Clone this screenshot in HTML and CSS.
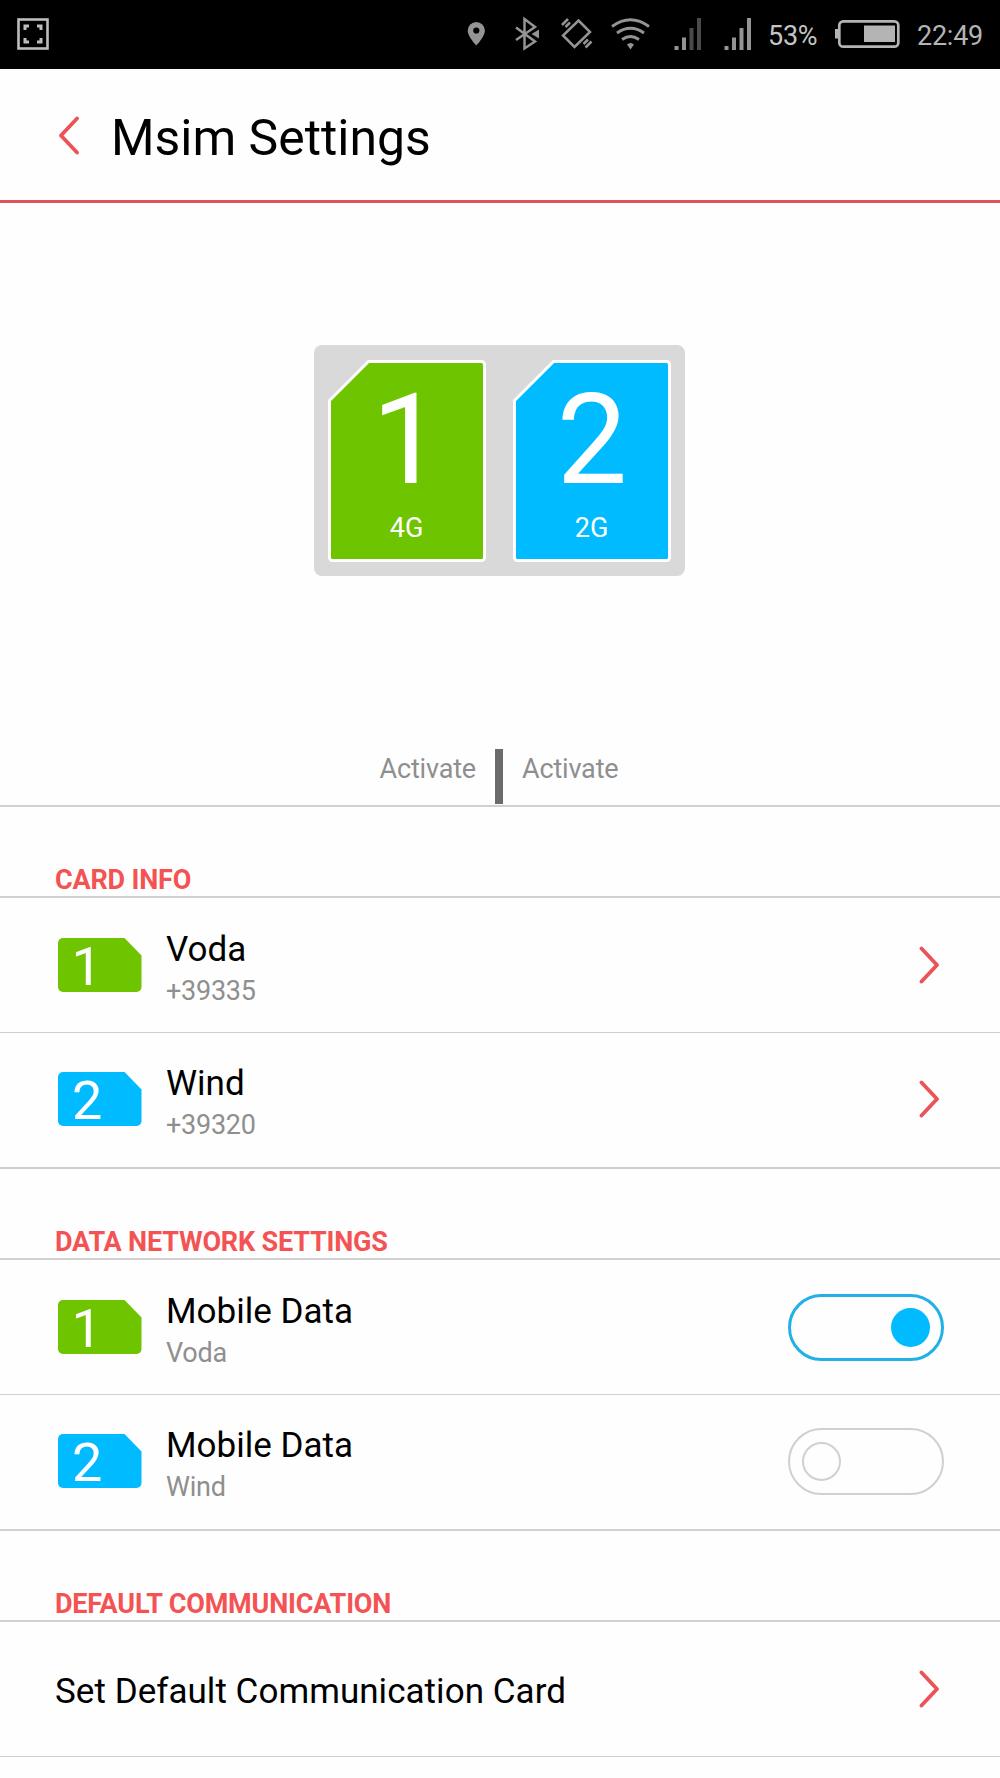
FILE: index.html
```html
<!DOCTYPE html>
<html lang="en">
<head>
<meta charset="utf-8">
<title>Msim Settings</title>
<link rel="stylesheet" href="styles.css">
</head>
<body>
<div class="status">
  <svg class="status-shot" width="34" height="69" viewBox="16 0 34 69" fill="none" stroke="#bdbdbd">
    <rect x="18.500" y="19.500" width="29" height="29" stroke-width="2.600"/>
    <path d="M25 30v-4h4M37 26h4v4M41 38v4h-4M29 42h-4v-4" stroke-width="3"/>
  </svg>
  <svg class="status-pin" width="18" height="69" viewBox="467 0 18 69" fill="#949494">
    <path fill-rule="evenodd" d="M476.300 22a8.600 8.600 0 0 0-8.600 8.600c0 6.200 8.600 15 8.600 15s8.600-8.800 8.600-15a8.600 8.600 0 0 0-8.600-8.600zm0 5.400a3.100 3.100 0 1 1 0 6.200a3.100 3.100 0 0 1 0-6.200z"/>
  </svg>
  <svg class="status-bt" width="26" height="69" viewBox="514 0 26 69" fill="none" stroke="#949494" stroke-width="2.500">
    <path d="M516 27.500l19 14-10.500 7V19l10.500 8-19 13"/>
    <path d="M539 29.500v9l-7.500-4.500z" fill="#949494" stroke="none"/>
  </svg>
  <svg class="status-vib" width="33" height="69" viewBox="560 0 33 69" fill="none" stroke="#949494" stroke-width="2.500">
    <path d="M578.500 20.500L590 32 574.500 47 563 35.500z"/>
    <path d="M562 25l6-6M565.500 27l4.500-4.500M583.500 44l4.500-4.500M585.500 47.500l6-6"/>
  </svg>
  <svg class="status-wifi" width="40" height="69" viewBox="611 0 40 69" fill="none" stroke="#949494" stroke-width="2.800">
    <path d="M612 26.500q18.500-13.500 37 0M617 33q13.500-9.500 27 0M622 39.500q8.500-6 17 0"/>
    <path d="M627 44.500q3.500-3 7 0l-3.500 5z" fill="#949494" stroke="none"/>
  </svg>
  <svg class="status-sig1" width="28" height="69" viewBox="674 0 28 69" fill="#949494">
    <path d="M674.500 46h4v4h-4zM682 37.500h4V50h-4z"/>
    <path d="M689.500 28h4v22h-4zM697 18h4v32h-4z" fill="#4b4b4b"/>
  </svg>
  <svg class="status-sig2" width="28" height="69" viewBox="724 0 28 69" fill="#949494">
    <path d="M724.500 46h4v4h-4zM732 37.500h4V50h-4zM739.500 28h4v22h-4zM747 18h4v32h-4z"/>
  </svg>
  <span class="status-pct">53%</span>
  <svg class="status-bat" width="65" height="69" viewBox="835 0 65 69">
    <rect x="839.300" y="21.300" width="59" height="25.400" rx="4" fill="none" stroke="#b4b4b4" stroke-width="2.700"/>
    <path d="M835 29h3v9.500h-3zM864 25.500h31V42h-31z" fill="#b4b4b4"/>
  </svg>
  <span class="status-time">22:49</span>
</div>

<header class="header">
  <svg class="back" width="21" height="39" viewBox="0 0 21 39"><path d="M19 2.500L3 19.500 19 36.500"/></svg>
  <h1 class="title">Msim Settings</h1>
</header>

<section class="hero">
  <div class="tray">
    <svg width="158" height="202" viewBox="0 0 158 202">
      <path class="sim-shape green" d="M40.500 1.500H153.500a3 3 0 0 1 3 3V197.500a3 3 0 0 1-3 3H4.500a3 3 0 0 1-3-3V40.500z"/>
      <text class="sim-digit" x="79" y="123">1</text>
      <text class="sim-net" x="78.500" y="177.400">4G</text>
    </svg>
    <svg width="158" height="202" viewBox="0 0 158 202">
      <path class="sim-shape blue" d="M40.500 1.500H153.500a3 3 0 0 1 3 3V197.500a3 3 0 0 1-3 3H4.500a3 3 0 0 1-3-3V40.500z"/>
      <text class="sim-digit" x="79" y="123">2</text>
      <text class="sim-net" x="78.500" y="177.400">2G</text>
    </svg>
  </div>
  <div class="activate">
    <span class="act-left">Activate</span>
    <span class="act-bar"></span>
    <span class="act-right">Activate</span>
  </div>
</section>

<h2 class="section">CARD INFO</h2>
<div class="row">
  <svg class="card" width="84" height="70" viewBox="0 -8 84 70"><path class="green" d="M5 0H66.500L83.500 17.500V49a5 5 0 0 1-5 5H5a5 5 0 0 1-5-5V5a5 5 0 0 1 5-5z"/><text class="card-digit" x="13.500" y="46.500">1</text></svg>
  <div class="label"><span class="name">Voda</span><span class="sub">+39335</span></div>
  <svg class="chev" width="21" height="38" viewBox="0 0 21 38"><path d="M2.500 2.500L18 19 2.500 35.500"/></svg>
</div>
<div class="row last">
  <svg class="card" width="84" height="70" viewBox="0 -8 84 70"><path class="blue" d="M5 0H66.500L83.500 17.500V49a5 5 0 0 1-5 5H5a5 5 0 0 1-5-5V5a5 5 0 0 1 5-5z"/><text class="card-digit" x="14" y="46.500">2</text></svg>
  <div class="label"><span class="name">Wind</span><span class="sub">+39320</span></div>
  <svg class="chev" width="21" height="38" viewBox="0 0 21 38"><path d="M2.500 2.500L18 19 2.500 35.500"/></svg>
</div>

<h2 class="section">DATA NETWORK SETTINGS</h2>
<div class="row">
  <svg class="card" width="84" height="70" viewBox="0 -8 84 70"><path class="green" d="M5 0H66.500L83.500 17.500V49a5 5 0 0 1-5 5H5a5 5 0 0 1-5-5V5a5 5 0 0 1 5-5z"/><text class="card-digit" x="13.500" y="46.500">1</text></svg>
  <div class="label"><span class="name">Mobile Data</span><span class="sub">Voda</span></div>
  <span class="toggle on"><span class="knob"></span></span>
</div>
<div class="row last">
  <svg class="card" width="84" height="70" viewBox="0 -8 84 70"><path class="blue" d="M5 0H66.500L83.500 17.500V49a5 5 0 0 1-5 5H5a5 5 0 0 1-5-5V5a5 5 0 0 1 5-5z"/><text class="card-digit" x="14" y="46.500">2</text></svg>
  <div class="label"><span class="name">Mobile Data</span><span class="sub">Wind</span></div>
  <span class="toggle"><span class="knob"></span></span>
</div>

<h2 class="section">DEFAULT COMMUNICATION</h2>
<div class="row">
  <span class="name single">Set Default Communication Card</span>
  <svg class="chev" width="21" height="38" viewBox="0 0 21 38"><path d="M2.500 2.500L18 19 2.500 35.500"/></svg>
</div>
</body>
</html>
```
FILE: styles.css
```css
* { box-sizing: border-box; }
body {
  margin: 0;
  width: 1000px;
  height: 1778px;
  overflow: hidden;
  background: #fefefe;
  color: #000;
  font-family: Roboto, "Liberation Sans", sans-serif;
  font-size: 27px;
}
svg { display: block; flex: none; }
h1, h2 { margin: 0; font-weight: 400; }
span { white-space: nowrap; }

.status {
  display: flex;
  height: 69px;
  background: #000;
  color: #b4b4b4;
  line-height: 73px;
  letter-spacing: -0.25px;
}
.status-shot { margin-left: 16px; }
.status-pin { margin-left: 417px; }
.status-bt { margin-left: 29px; }
.status-vib { margin-left: 20px; }
.status-wifi { margin-left: 18px; }
.status-sig1 { margin-left: 23px; }
.status-sig2 { margin-left: 22px; }
.status-pct { margin-left: 16px; width: 67px; color: #c4c4c4; }
.status-time { margin-left: 17px; }

.header {
  display: flex;
  align-items: center;
  height: 134px;
  padding: 0 0 0 58px;
  border-bottom: 3px solid #e0525a;
}
.back { margin-top: 2px; }
.back path, .chev path {
  fill: none;
  stroke: #eb5357;
  stroke-width: 3.8;
  stroke-linecap: round;
  stroke-linejoin: round;
}
.title { margin-left: 32px; font-size: 49.9px; line-height: 60px; padding-top: 6px; white-space: nowrap; }

.hero {
  display: flex;
  flex-direction: column;
  align-items: center;
  justify-content: space-between;
  height: 604px;
  padding-top: 142px;
  border-bottom: 2px solid #d0d0d0;
}
.tray {
  display: flex;
  gap: 27px;
  width: 371px;
  height: 231px;
  margin-right: 1px;
  padding: 15px 14px;
  border-radius: 8px;
  background: #d9d9d9;
}
.green { fill: #6fc400; }
.blue { fill: #00bbff; }
.sim-shape { stroke: #fff; stroke-width: 3; }
.sim-digit { fill: #fff; font-size: 125.5px; text-anchor: middle; }
.sim-net { fill: #fff; font-size: 27px; text-anchor: middle; }
.activate {
  display: grid;
  grid-template-columns: 1fr 8px 1fr;
  column-gap: 19px;
  width: 1000px;
  height: 56px;
  padding-right: 2px;
  line-height: 41px;
  letter-spacing: -0.18px;
  color: #8f8f8f;
}
.act-left { text-align: right; }
.act-bar { height: 55px; background: #6b6b6b; }

.section {
  height: 91px;
  padding: 57px 0 0 55px;
  border-bottom: 2px solid #d0d0d0;
  font-size: 27px;
  font-weight: 700;
  line-height: 32px;
  letter-spacing: -0.18px;
  color: #f45354;
}
.row {
  display: flex;
  align-items: center;
  height: 135px;
  padding: 0 56px 0 58px;
  border-bottom: 1px solid #d0d0d0;
}
.row.last { height: 136px; padding-bottom: 1px; border-bottom-width: 2px; }
.row.last .card, .row.last .chev { margin-bottom: 1px; }
.card-digit { fill: #fff; font-size: 54px; }
.label { display: flex; flex-direction: column; margin-left: 24px; flex: 1; padding-top: 8px; }
.row.last .label { padding-top: 7px; }
.name { font-size: 35px; line-height: 44px; }
.sub { line-height: 38px; letter-spacing: -0.25px; color: #8f8f8f; }
.single { margin-left: -3px; flex: 1; padding-top: 5px; letter-spacing: 0.04px; }
.chev { margin-right: 4px; }
.toggle {
  display: flex;
  align-items: center;
  width: 156px;
  height: 67px;
  border: 2px solid #d0d0d0;
  border-radius: 34px;
  padding: 0 12px;
}
.knob { width: 39px; height: 39px; border: 2px solid #d0d0d0; border-radius: 50%; }
.on { border: 3px solid #22b1e6; justify-content: flex-end; padding: 0 11px; }
.on .knob { background: #00bbff; border: 0; }
```
